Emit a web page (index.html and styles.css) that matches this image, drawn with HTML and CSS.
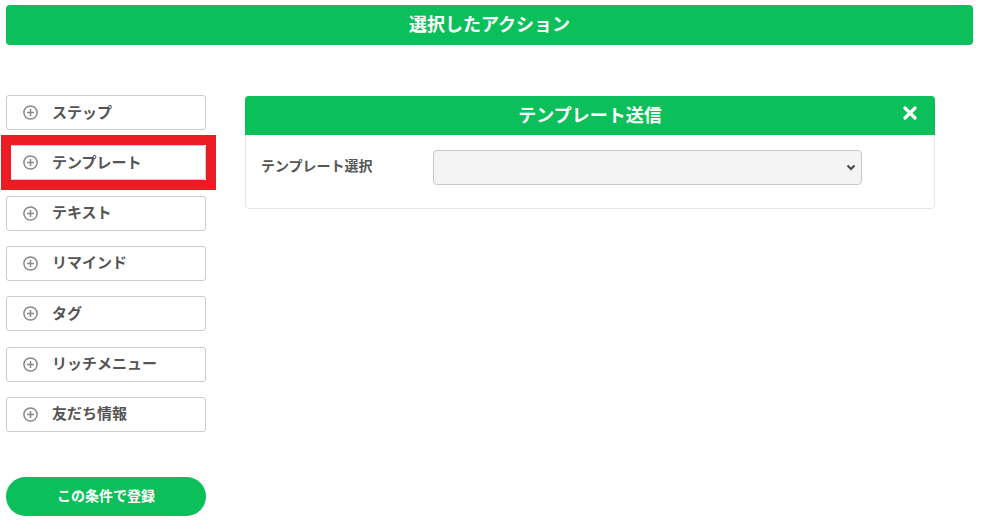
FILE: index.html
```html
<!DOCTYPE html>
<html lang="ja">
<head>
<meta charset="utf-8">
<link rel="stylesheet" href="styles.css">
</head>
<body>
<div class="topbar">選択したアクション</div>
<div class="main">
  <div class="sidebar">
    <div class="menu">
      <div class="item"><span class="plus"><svg width="15" height="15" viewBox="0 0 15 15"><circle cx="7.5" cy="7.5" r="6.6" fill="none" stroke="#888" stroke-width="1.5"/><path d="M7.5 4v7M4 7.5h7" stroke="#888" stroke-width="1.5"/></svg></span>ステップ</div>
      <div class="item selected"><span class="plus"><svg width="15" height="15" viewBox="0 0 15 15"><circle cx="7.5" cy="7.5" r="6.6" fill="none" stroke="#888" stroke-width="1.5"/><path d="M7.5 4v7M4 7.5h7" stroke="#888" stroke-width="1.5"/></svg></span>テンプレート<span class="mark"></span></div>
      <div class="item"><span class="plus"><svg width="15" height="15" viewBox="0 0 15 15"><circle cx="7.5" cy="7.5" r="6.6" fill="none" stroke="#888" stroke-width="1.5"/><path d="M7.5 4v7M4 7.5h7" stroke="#888" stroke-width="1.5"/></svg></span>テキスト</div>
      <div class="item"><span class="plus"><svg width="15" height="15" viewBox="0 0 15 15"><circle cx="7.5" cy="7.5" r="6.6" fill="none" stroke="#888" stroke-width="1.5"/><path d="M7.5 4v7M4 7.5h7" stroke="#888" stroke-width="1.5"/></svg></span>リマインド</div>
      <div class="item"><span class="plus"><svg width="15" height="15" viewBox="0 0 15 15"><circle cx="7.5" cy="7.5" r="6.6" fill="none" stroke="#888" stroke-width="1.5"/><path d="M7.5 4v7M4 7.5h7" stroke="#888" stroke-width="1.5"/></svg></span>タグ</div>
      <div class="item"><span class="plus"><svg width="15" height="15" viewBox="0 0 15 15"><circle cx="7.5" cy="7.5" r="6.6" fill="none" stroke="#888" stroke-width="1.5"/><path d="M7.5 4v7M4 7.5h7" stroke="#888" stroke-width="1.5"/></svg></span>リッチメニュー</div>
      <div class="item"><span class="plus"><svg width="15" height="15" viewBox="0 0 15 15"><circle cx="7.5" cy="7.5" r="6.6" fill="none" stroke="#888" stroke-width="1.5"/><path d="M7.5 4v7M4 7.5h7" stroke="#888" stroke-width="1.5"/></svg></span>友だち情報</div>
    </div>
    <div class="submit">この条件で登録</div>
  </div>
  <div class="panel">
    <div class="panel-head">テンプレート送信<span class="close"><svg width="14" height="14" viewBox="0 0 14 14"><path d="M2 2L12 12M12 2L2 12" stroke="#fff" stroke-width="3.2" stroke-linecap="round"/></svg></span></div>
    <div class="panel-body">
      <div class="label">テンプレート選択</div>
      <div class="select"><svg width="10" height="7" viewBox="0 0 10 7"><path d="M1.5 1.5L5 5L8.5 1.5" fill="none" stroke="#444" stroke-width="2"/></svg></div>
    </div>
  </div>
</div>
</body>
</html>
```
FILE: styles.css
```css
* { box-sizing: border-box; }
body {
  margin: 0;
  background: #fff;
  font-family: "Noto Sans CJK JP", "Noto Sans", sans-serif;
}
.topbar {
  margin: 5px 10px 0 6px;
  height: 40px;
  padding-bottom: 4px;
  background: #0bbf5a;
  border-radius: 4px;
  color: #fff;
  font-weight: 700;
  font-size: 18px;
  display: flex;
  align-items: center;
  justify-content: center;
}
.main {
  display: flex;
  gap: 39px;
  padding-left: 6px;
}
.sidebar {
  width: 200px;
  padding-top: 50px;
}
.menu {
  display: flex;
  flex-direction: column;
  gap: 15.33px;
}
.item {
  position: relative;
  height: 35px;
  padding-bottom: 3px;
  border: 1px solid #cccccc;
  border-radius: 3px;
  display: flex;
  align-items: center;
  padding-left: 16px;
  font-size: 15px;
  font-weight: 700;
  color: #555;
}
.plus {
  display: flex;
  margin-right: 14px;
  margin-top: 3px;
}
.mark {
  position: absolute;
  left: -6px;
  top: -11px;
  width: 215px;
  height: 55px;
  border: 10px solid #ed1c24;
}
.submit {
  margin-top: 45px;
  height: 39px;
  padding-bottom: 2px;
  border-radius: 20px;
  background: #0bbf5a;
  color: #fff;
  font-size: 14px;
  font-weight: 700;
  display: flex;
  align-items: center;
  justify-content: center;
}
.panel {
  margin-top: 51px;
  width: 690px;
  height: 113px;
  border: 1px solid #e6e6e6;
  border-radius: 4px;
}
.panel-head {
  position: relative;
  margin: -1px -1px 0 -1px;
  height: 39px;
  padding-bottom: 3px;
  background: #0bbf5a;
  border-radius: 4px 4px 0 0;
  color: #fff;
  font-weight: 700;
  font-size: 18px;
  display: flex;
  align-items: center;
  justify-content: center;
}
.close {
  position: absolute;
  right: 18px;
  top: 10px;
  display: flex;
}
.panel-body {
  display: flex;
  align-items: center;
  padding: 15px 0 0 15px;
}
.label {
  width: 172px;
  padding-bottom: 5px;
  font-size: 14px;
  font-weight: 700;
  color: #555;
}
.select {
  width: 429px;
  height: 35px;
  background: #f4f4f4;
  border: 1px solid #c8c8c8;
  border-radius: 4px;
  display: flex;
  align-items: center;
  justify-content: flex-end;
  padding-right: 5px;
}
```
